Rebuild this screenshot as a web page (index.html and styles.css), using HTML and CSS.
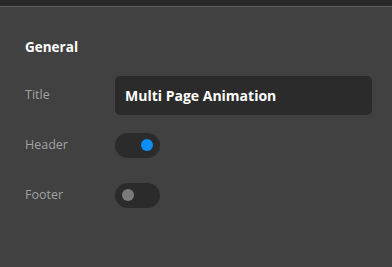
FILE: index.html
```html
<!DOCTYPE html>
<html lang="en">
<head>
    <meta charset="UTF-8">
    <meta name="viewport" content="width=device-width, initial-scale=1.0">
    <title>Settings</title>
    <link rel="stylesheet" href="styles.css">
</head>
<body>

<div class="topbar"></div>

<div class="panel">
    <h2 class="section-title">General</h2>

    <div class="row">
        <div class="label">Title</div>
        <div class="field">
            <input class="text-input" type="text" value="Multi Page Animation">
        </div>
    </div>

    <div class="row">
        <div class="label">Header</div>
        <div class="field">
            <div class="toggle on"><span class="knob"></span></div>
        </div>
    </div>

    <div class="row">
        <div class="label">Footer</div>
        <div class="field">
            <div class="toggle"><span class="knob"></span></div>
        </div>
    </div>
</div>

</body>
</html>
```

FILE: styles.css
```css
html, body {
    margin: 0;
    padding: 0;
    height: 100%;
}

body {
    background-color: #414141;
    font-family: "Open Sans", "Noto Sans", sans-serif;
    color: white;
}

.topbar {
    height: 6px;
    background-color: #2a2a2a;
    border-bottom: 1px solid #5e5e5e;
}

.panel {
    padding: 0 20px 0 25px;
}

.section-title {
    margin: 0;
    padding-top: 31px;
    height: 32px;
    font-size: 13.5px;
    font-weight: bold;
    line-height: 18px;
    color: #ffffff;
}

.row {
    display: flex;
    align-items: center;
    height: 50px;
}

.label {
    width: 90px;
    font-size: 12.5px;
    color: #a0a0a0;
    margin-top: -1px;
}

.field {
    flex: 1;
    display: flex;
    align-items: center;
}

.text-input {
    box-sizing: border-box;
    width: 100%;
    height: 39px;
    padding: 0 10px;
    border: none;
    border-radius: 5px;
    background-color: #2b2b2b;
    color: white;
    font-family: "Open Sans", "Noto Sans", sans-serif;
    font-size: 14px;
    font-weight: bold;
    outline: none;
}

.toggle {
    width: 45px;
    height: 25px;
    border-radius: 13px;
    background-color: #2b2b2b;
    display: flex;
    align-items: center;
    padding: 0 7px;
    box-sizing: border-box;
}

.knob {
    width: 12px;
    height: 12px;
    border-radius: 50%;
    background-color: #7b7b7b;
}

.toggle.on {
    justify-content: flex-end;
}

.toggle.on .knob {
    background-color: #0b8ef5;
}
```
